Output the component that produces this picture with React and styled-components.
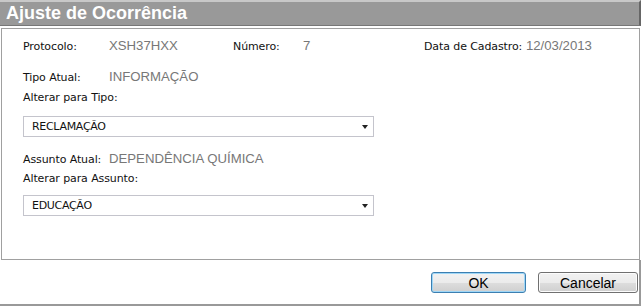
import React from "react";
import styled, { createGlobalStyle } from "styled-components";

const Global = createGlobalStyle`
  body {
    margin: 0;
    background: #fff;
    font-family: "DejaVu Sans", Tahoma, sans-serif;
  }
`;

const Dialog = styled.div`
  width: 641px;
  height: 307px;
  display: flex;
  flex-direction: column;
  box-sizing: border-box;
`;

const TitleBar = styled.div`
  height: 26px;
  box-sizing: border-box;
  background: #999;
  border-top: 2px solid #c8c8c8;
  border-right: 2px solid #666;
  border-bottom: 1px solid #777;
  color: #fff;
  font-family: "Liberation Sans", Arial, sans-serif;
  font-weight: bold;
  font-size: 18px;
  line-height: 23px;
  padding-left: 6px;
`;

const Panel = styled.div`
  margin: 2px 1px 0 1px;
  height: 232px;
  box-sizing: border-box;
  border: 1px solid #a0a0a0;
  padding: 9px 0 0 21px;
`;

const Row = styled.div`
  display: flex;
  align-items: baseline;
  height: ${(p) => p.$h || 22}px;
`;

const Label = styled.span`
  font-size: 11px;
  letter-spacing: -0.1px;
  color: #111;
  width: ${(p) => (p.$w ? p.$w + "px" : "auto")};
  flex-shrink: 0;
`;

const Value = styled.span`
  font-family: "Liberation Sans", Arial, sans-serif;
  font-size: 13.2px;
  color: #777;
  width: ${(p) => (p.$w ? p.$w + "px" : "auto")};
  flex-shrink: 0;
`;

const Select = styled.div`
  width: 351px;
  height: 21px;
  box-sizing: border-box;
  border: 1px solid #c4c4cc;
  display: flex;
  align-items: center;
  justify-content: space-between;
  padding: 0 5px 0 8px;
  font-size: 11px;
  letter-spacing: -0.3px;
  color: #111;
  margin-bottom: ${(p) => p.$mb || 0}px;
`;

const Arrow = styled.span`
  width: 0;
  height: 0;
  border-left: 3.5px solid transparent;
  border-right: 3.5px solid transparent;
  border-top: 4px solid #222;
`;

const Footer = styled.div`
  flex: 1;
  display: flex;
  justify-content: flex-end;
  align-items: flex-start;
  gap: 12px;
  padding: 12px 1px 0 0;
  border-right: 2px solid #999;
  border-bottom: 2px solid #999;
  margin-bottom: 1px;
`;

const Button = styled.button`
  width: ${(p) => p.$w}px;
  height: 21px;
  box-sizing: border-box;
  border: 1px solid ${(p) => (p.$focus ? "#3c7fb1" : "#707070")};
  border-radius: 3px;
  background: linear-gradient(#f2f2f2 0%, #ebebeb 50%, #dddddd 51%, #cfcfcf 100%);
  box-shadow: inset 0 0 0 1px ${(p) => (p.$focus ? "#9fd7f7" : "#fcfcfc")};
  font-family: "Liberation Sans", Arial, sans-serif;
  font-size: 14px;
  color: #000;
  padding: 0;
  line-height: 18px;
`;

export default function App() {
  return (
    <>
      <Global />
      <Dialog>
        <TitleBar>Ajuste de Ocorrência</TitleBar>
        <Panel>
          <Row $h={31}>
            <Label $w={86}>Protocolo:</Label>
            <Value $w={124}>XSH37HXX</Value>
            <Label $w={70}>Número:</Label>
            <Value $w={121}>7</Value>
            <Label>Data de Cadastro:</Label>
            <Value>&nbsp;12/03/2013</Value>
          </Row>
          <Row $h={22}>
            <Label $w={86}>Tipo Atual:</Label>
            <Value>INFORMAÇÃO</Value>
          </Row>
          <Row $h={25}>
            <Label>Alterar para Tipo:</Label>
          </Row>
          <Select $mb={14}>
            RECLAMAÇÃO
            <Arrow />
          </Select>
          <Row $h={21}>
            <Label $w={86}>Assunto Atual:</Label>
            <Value>DEPENDÊNCIA QUÍMICA</Value>
          </Row>
          <Row $h={23}>
            <Label>Alterar para Assunto:</Label>
          </Row>
          <Select>
            EDUCAÇÃO
            <Arrow />
          </Select>
        </Panel>
        <Footer>
          <Button $w={95} $focus>OK</Button>
          <Button $w={100}>Cancelar</Button>
        </Footer>
      </Dialog>
    </>
  );
}
